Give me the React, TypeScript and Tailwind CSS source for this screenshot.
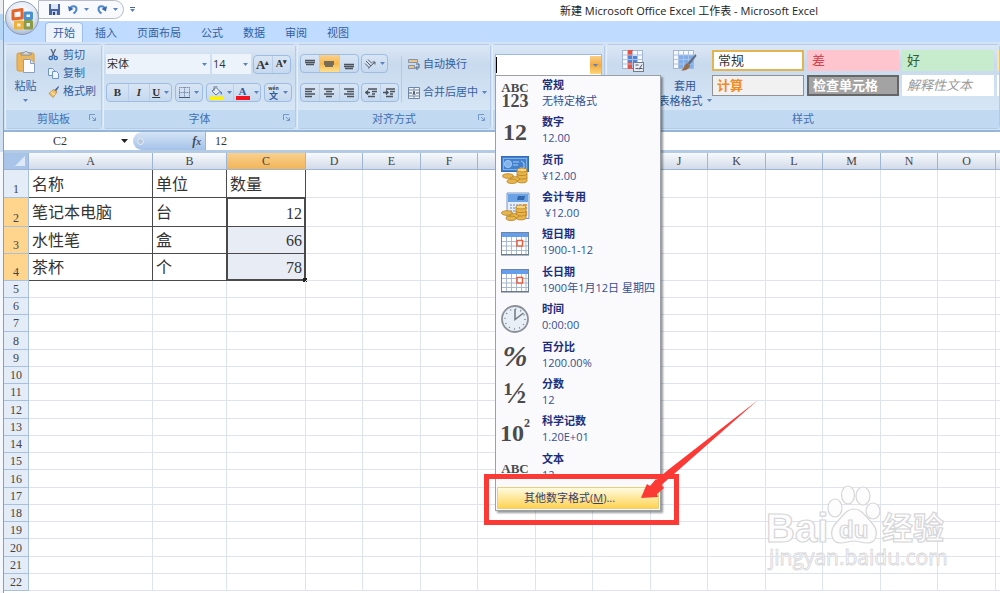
import { useState, type ReactNode } from "react";

const uiFont = "font-['Open_Sans','Noto_Sans_CJK_SC',sans-serif]";
const cellFont = "font-['Liberation_Serif','Noto_Sans_CJK_SC',serif]";

const tabs = ["开始", "插入", "页面布局", "公式", "数据", "审阅", "视图"];

const columns = ["A", "B", "C", "D", "E", "F", "G", "H", "I", "J", "K", "L", "M", "N", "O", "P"];

const data: string[][] = [
  ["名称", "单位", "数量"],
  ["笔记本电脑", "台", "12"],
  ["水性笔", "盒", "66"],
  ["茶杯", "个", "78"],
];

function columnWidth(i: number) {
  if (i === 0) return "w-[124px]";
  if (i === 1) return "w-[74px]";
  if (i === 2) return "w-[79px]";
  return i % 2 ? "w-[57px]" : "w-[58px]";
}

function Caret({ className = "" }: { className?: string }) {
  return (
    <svg className={`w-[5px] h-[3px] shrink-0 ${className}`} viewBox="0 0 5 3" fill="#5b83bd" aria-hidden="true">
      <path d="M0 0h5L2.500 3z" />
    </svg>
  );
}

function Launcher() {
  return (
    <svg className="absolute right-1 top-1 w-2 h-2" viewBox="0 0 8 8" fill="none" stroke="#7397c6" aria-hidden="true">
      <path d="M.5 6V.5H6M3 3l3.500 3.500M6.500 3.500v3h-3" />
    </svg>
  );
}

function Group({ label, launcher, className = "", children }: { label: string; launcher?: boolean; className?: string; children: ReactNode }) {
  return (
    <section className={`flex flex-col rounded-sm border border-[#b3cbe8] border-l-[#e6f0fb] ${className}`}>
      <div className="h-[65px] bg-linear-to-b from-[#dbe7f5] via-[#c9daee] via-30% to-[#d6e6f6]">{children}</div>
      <div className="relative h-[18px] bg-[#c1d9f1] text-center text-[11px] leading-[17px] text-[#4470b3]">
        {label}
        {launcher && <Launcher />}
      </div>
    </section>
  );
}

function ButtonBox({ className = "", children }: { className?: string; children: ReactNode }) {
  return (
    <div className={`flex h-[19px] rounded-sm border border-[#9ebbe0] bg-linear-to-b from-[#d8e5f4] to-[#c6d9ef] divide-x divide-[#b9cfe9] ${className}`}>
      {children}
    </div>
  );
}

function ToolButton({ label, active, children }: { label: string; active?: boolean; children: ReactNode }) {
  return (
    <button
      aria-label={label}
      className={`flex flex-1 items-center justify-center gap-1 ${active ? "bg-linear-to-b from-[#fbd08a] via-[#f9b84b] to-[#fddf8d]" : ""}`}
    >
      {children}
    </button>
  );
}

function Lines({ d }: { d: string }) {
  return (
    <svg className="w-3 h-3" viewBox="0 0 12 12" stroke="#4c525c" strokeWidth="1.500" fill="none" aria-hidden="true">
      <path d={d} />
    </svg>
  );
}

function OfficeLogo() {
  return (
    <svg className="w-9 h-9" viewBox="0 0 36 36" aria-hidden="true">
      <defs>
        <radialGradient id="orb" cx="50%" cy="35%" r="65%">
          <stop offset="0" stopColor="#ffffff" />
          <stop offset=".6" stopColor="#e4eaf4" />
          <stop offset="1" stopColor="#a9b9d2" />
        </radialGradient>
      </defs>
      <circle cx="18" cy="18" r="16.500" fill="url(#orb)" stroke="#8b9dbb" />
      <g fill="none" strokeWidth="3" strokeLinejoin="round">
        <path d="M9 11l9-1.500v8.500l-9 1z" stroke="#e2662c" />
        <path d="M21 13h6.500v5.500H21z" stroke="#4a91d0" />
        <path d="M11.500 22h6.500v6h-6.500z" stroke="#eeb13a" />
        <path d="M21 21.500h6.500V28H21z" stroke="#8a9a45" />
      </g>
    </svg>
  );
}

function UndoIcon({ flip }: { flip?: boolean }) {
  return (
    <svg className={`w-[10px] h-[11px] ${flip ? "-scale-x-100" : ""}`} viewBox="0 0 10 11" fill="none" aria-hidden="true">
      <path d="M2 5c1-4 6.500-3.500 6.500 0 0 2-1.500 3.500-3 4.500" stroke="#5088cd" strokeWidth="2" />
      <path d="M0 2l1 5.500L5.500 5z" fill="#3469b2" />
    </svg>
  );
}

function PasteIcon() {
  return (
    <svg className="w-5 h-[22px]" viewBox="0 0 20 22" aria-hidden="true">
      <rect x="1" y="2" width="17" height="18" rx="1.500" fill="#ecb75c" stroke="#d79a3a" />
      <path d="M5 4V2h3c0-2 4-2 4 0h3v2z" fill="#d8dce2" stroke="#77808c" strokeWidth=".8" />
      <path d="M7.500 8.500h7l4 4v9h-11z" fill="#fafcff" stroke="#8ba1bf" />
      <path d="M14.500 8.500v4h4" fill="#dce6f3" stroke="#8ba1bf" />
    </svg>
  );
}

function CutIcon() {
  return (
    <svg className="w-[11px] h-3" viewBox="0 0 11 12" fill="none" aria-hidden="true">
      <path d="M3 0l3.500 7.500M7.500 0L4 7.500" stroke="#56677f" strokeWidth="1.300" />
      <circle cx="2.800" cy="9" r="1.600" stroke="#3168b5" strokeWidth="1.400" />
      <circle cx="7.700" cy="9" r="1.600" stroke="#3168b5" strokeWidth="1.400" />
    </svg>
  );
}

function CopyIcon() {
  return (
    <svg className="w-[11px] h-3" viewBox="0 0 11 12" fill="#eef4fc" stroke="#6e94c8" aria-hidden="true">
      <path d="M.5 1.500h4l2 2v5h-6z" />
      <path d="M4.500 4.500h4l2 2v5h-6z" />
    </svg>
  );
}

function BrushIcon() {
  return (
    <svg className="w-[11px] h-3" viewBox="0 0 11 12" aria-hidden="true">
      <path d="M10.500 0L6.500 4l1.500 1.500L11 1z" fill="#46629a" />
      <path d="M5.500 3.500L1 7.500l4 4 4-5.500z" fill="#f0c169" stroke="#b07c2b" strokeWidth=".7" />
      <path d="M3 6l4 3" stroke="#fff3ce" />
    </svg>
  );
}

function TableIcon({ brush }: { brush?: boolean }) {
  return (
    <svg className="w-6 h-[22px]" viewBox="0 0 24 22" aria-hidden="true">
      <rect x=".5" y=".5" width="20" height="18" fill="#f5f8fd" stroke="#a3b5d1" />
      {brush ? (
        <rect x="5" y="5" width="15" height="13" fill="#7faeed" />
      ) : (
        <>
          <path d="M6 0h5v19H6z" fill="#e25443" />
          <path d="M6 6h9v6H6z" fill="#4f84d6" />
        </>
      )}
      <path d="M5.500 1v17M10.500 1v17M15.500 1v17M1 5h19M1 9.500h19M1 14h19" stroke="#adc2e2" fill="none" />
      {brush ? (
        <>
          <path d="M22.500 4l-8 9 2 2 7-9z" fill="#617087" />
          <path d="M14 13l3 2.500c-1 4-5 5.500-9 5 3-1.500 3-5.500 6-7.500z" fill="#966d46" />
        </>
      ) : (
        <>
          <rect x="11.500" y="12.500" width="10" height="9" fill="#e9edf3" stroke="#737c89" />
          <path d="M13.500 15h3M13.500 18.500h3M20 14.500l-3 5M18 18.500h2.500" stroke="#4e5866" />
        </>
      )}
    </svg>
  );
}

function Coins() {
  return (
    <g fill="#e8b54a" stroke="#b57f23" strokeWidth=".8">
      <path d="M16 15v11c0 2.500 10 2.500 10 0V15z" />
      <ellipse cx="21" cy="15" rx="5" ry="2" fill="#f8d57c" />
      <path d="M16 19c0 2 10 2 10 0M16 22.500c0 2 10 2 10 0" fill="none" />
      <ellipse cx="7" cy="21" rx="5.500" ry="2.300" />
      <ellipse cx="14" cy="24" rx="4.500" ry="2.300" />
      <ellipse cx="11" cy="26.300" rx="5" ry="2.200" />
    </g>
  );
}

function CurrencyIcon() {
  return (
    <svg className="w-7 h-[29px]" viewBox="0 0 28 29" aria-hidden="true">
      <rect x=".5" y="1.500" width="27" height="15" fill="#4381cf" stroke="#346cb4" />
      <rect x="2.500" y="3.500" width="23" height="11" fill="none" stroke="#7fb0e8" />
      <circle cx="7" cy="9" r="3.500" fill="#82b3ea" stroke="#a9cdf3" />
      <path d="M12 7h6M12 10h5M20 6l3 2v5h-4" stroke="#a9cdf3" fill="none" />
      <Coins />
    </svg>
  );
}

function AccountingIcon() {
  return (
    <svg className="w-[30px] h-[29px]" viewBox="0 0 30 29" aria-hidden="true">
      <path d="M7 1h22v25.500H7z" fill="#e4edf9" stroke="#7498cb" />
      <path d="M8 2h20v8H8z" fill="#6ba2e6" />
      <path d="M17 8l1-4h7l-1 4z" fill="#3366ab" />
      <path d="M10 13h12M10 16h9M10 19h7" stroke="#97aac9" strokeWidth="1.500" strokeDasharray="2 1" />
      <path d="M23 13h4M24 16h3M26 19v5" stroke="#e79b56" strokeWidth="2" />
      <Coins />
    </svg>
  );
}

function CalendarIcon() {
  return (
    <svg className="w-7 h-6" viewBox="0 0 28 24" fill="none" aria-hidden="true">
      <rect x=".5" y=".5" width="27" height="22" fill="#fff" stroke="#70839f" />
      <path d="M1 1h26v4H1z" fill="#659eec" />
      <path d="M5.500 5v17M10.500 5v17M15.500 5v17M20.500 5v17M25 5v17M1 9.500h26M1 14h26M1 18.500h26" stroke="#a9b9cf" />
      <rect x="16" y="8.500" width="5.500" height="5.500" stroke="#ea5f42" strokeWidth="1.500" fill="#fff" />
      <path d="M0 23h28" stroke="#65707f" />
    </svg>
  );
}

function ClockIcon() {
  return (
    <svg className="w-7 h-7" viewBox="0 0 28 28" fill="none" aria-hidden="true">
      <circle cx="14" cy="14" r="13" fill="#e9eff7" stroke="#8b9097" strokeWidth="1.800" />
      <circle cx="14" cy="14" r="10" stroke="#78838f" strokeWidth="1.500" strokeDasharray="1 4.236" />
      <path d="M14 4v10.500l8.500-6.500" stroke="#737a83" strokeWidth="1.500" />
    </svg>
  );
}

interface NumberFormat {
  name: string;
  sample: string;
  icon: ReactNode;
}

const formats: NumberFormat[] = [
  {
    name: "常规",
    sample: "无特定格式",
    icon: (
      <span className="flex flex-col items-center">
        <span className="text-[13px] leading-[13px]">ABC</span>
        <span className="text-[18px] leading-[15px]">123</span>
      </span>
    ),
  },
  { name: "数字", sample: "12.00", icon: <span className="text-2xl leading-6">12</span> },
  { name: "货币", sample: "¥12.00", icon: <CurrencyIcon /> },
  { name: "会计专用", sample: " ¥12.00", icon: <AccountingIcon /> },
  { name: "短日期", sample: "1900-1-12", icon: <CalendarIcon /> },
  { name: "长日期", sample: "1900年1月12日 星期四", icon: <CalendarIcon /> },
  { name: "时间", sample: "0:00:00", icon: <ClockIcon /> },
  { name: "百分比", sample: "1200.00%", icon: <span className="text-3xl italic">%</span> },
  { name: "分数", sample: "12", icon: <span className="text-3xl">½</span> },
  {
    name: "科学记数",
    sample: "1.20E+01",
    icon: (
      <span className="flex items-start">
        <span className="pt-1 text-2xl leading-6">10</span>
        <span className="text-xs leading-3">2</span>
      </span>
    ),
  },
  { name: "文本", sample: "12", icon: <span className="text-[13px]">ABC</span> },
];

function FormatMenu() {
  return (
    <div role="menu" className="absolute -left-px top-full z-10 w-[166px] border border-[#9aa0a8] bg-[#fafafd] shadow-[2px_2px_2px_#0006]">
      <div className="h-[400px] overflow-hidden">
        <div className="grid h-[411px] auto-rows-fr">
          {formats.map((f) => (
            <button key={f.name} role="menuitem" className="flex min-h-0 items-start text-left">
              <span className="flex h-[37px] w-[38px] shrink-0 items-center justify-center text-center font-['Liberation_Serif',serif] font-bold leading-none text-[#4b4b4b]">
                {f.icon}
              </span>
              <span className="pl-2 pt-px text-[11px] leading-4 whitespace-pre text-[#35508f]">
                <span className="block font-bold text-[#1c2f7c]">{f.name}</span>
                {f.sample}
              </span>
            </button>
          ))}
        </div>
      </div>
      <div className="p-px pt-[11px]">
        <button
          role="menuitem"
          className="block h-[22px] w-full border border-[#e8cf7e] bg-linear-to-b from-[#fffbe0] via-[#ffe9a0] via-45% to-[#ffd24f] pl-[26px] text-left text-[11px] leading-5 text-[#35426e]"
        >
          其他数字格式(<u>M</u>)...
        </button>
      </div>
    </div>
  );
}

function TitleBar() {
  return (
    <header className="relative flex h-[21px] shrink-0 items-start bg-white">
      <button aria-label="Office" className="absolute left-0 top-0 z-10 rounded-full">
        <OfficeLogo />
      </button>
      <div className="ml-[34px] flex h-[19px] w-[86px] items-center rounded-r-full border border-[#b6bcc6] bg-[#f7f9fc] pl-[10px]">
        <button aria-label="保存">
          <svg className="w-[11px] h-[11px]" viewBox="0 0 11 11" aria-hidden="true">
            <path d="M0 0h11v11H0z" fill="#4764a4" />
            <path d="M2 0h7v5H2z" fill="#dce8fa" />
            <path d="M3 7h5v4H3z" fill="#bed0ee" />
            <path d="M4 8h2v3H4z" fill="#29447c" />
          </svg>
        </button>
        <button aria-label="撤消" className="ml-2 flex items-center gap-[6px]">
          <UndoIcon />
          <Caret />
        </button>
        <button aria-label="恢复" className="ml-2 flex items-center gap-[6px]">
          <UndoIcon flip />
          <Caret />
        </button>
      </div>
      <button aria-label="自定义快速访问工具栏" className="ml-[6px] mt-[7px] flex flex-col gap-px">
        <span className="h-px w-[5px] bg-[#4c648e]" />
        <Caret />
      </button>
      <h1 className="ml-[425px] text-[11px] leading-[21px] text-[#222] whitespace-nowrap">
        新建 Microsoft Office Excel 工作表 - Microsoft Excel
      </h1>
    </header>
  );
}

function TabBar() {
  const [current, setCurrent] = useState("开始");
  return (
    <nav role="tablist" className="flex h-[21px] shrink-0 items-end gap-1 bg-[#bfdbff] pl-[41px]">
      {tabs.map((t) => (
        <button
          key={t}
          role="tab"
          aria-selected={t === current}
          onClick={() => setCurrent(t)}
          className={`h-5 rounded-t-sm border border-b-0 px-[7px] text-[11px] leading-[17px] text-[#35609f] ${
            t === current ? "border-[#9cbde8] bg-[#ecf3fb]" : "border-transparent"
          }`}
        >
          {t}
        </button>
      ))}
    </nav>
  );
}

function ClipboardGroup() {
  return (
    <Group label="剪贴板" launcher className="w-[97px]">
      <div className="flex h-full pt-px text-[11px] text-[#35609f]">
        <button className="flex w-[39px] flex-col items-center justify-start pt-[5px]">
          <PasteIcon />
          <span className="leading-4 mt-[5px]">粘贴</span>
          <Caret className="mt-[5px]" />
        </button>
        <div className="flex flex-col pl-[3px]">
          <button className="flex h-[18px] items-center gap-1"><CutIcon />剪切</button>
          <button className="flex h-[18px] items-center gap-1"><CopyIcon />复制</button>
          <button className="flex h-[19px] items-center gap-1"><BrushIcon />格式刷</button>
        </div>
      </div>
    </Group>
  );
}

function Picker({ label, value, className }: { label: string; value: string; className: string }) {
  return (
    <div className={`relative ${className}`}>
      <select aria-label={label} defaultValue={value} className="block h-5 w-full appearance-none bg-[#ecf3fb] pl-px text-[11px] leading-5 text-[#333]">
        <option>{value}</option>
      </select>
      <Caret className="pointer-events-none absolute right-[3px] top-[9px]" />
    </div>
  );
}

function FontGroup() {
  return (
    <Group label="字体" launcher className="w-[193px]">
      <div className="flex flex-col gap-[9px] px-[2px] pt-[9px] font-['Liberation_Serif',serif] font-bold text-[#333]">
        <div className="flex h-5 items-center gap-[2px] font-normal font-['Open_Sans','Noto_Sans_CJK_SC',sans-serif]">
          <Picker label="字体" value="宋体" className="w-[104px]" />
          <Picker label="字号" value="14" className="w-[39px]" />
          <ButtonBox className="w-[38px] font-['Liberation_Serif',serif] font-bold">
            <ToolButton label="增大字号"><span className="text-[13px] leading-none">A<sup className="text-[7px]">▴</sup></span></ToolButton>
            <ToolButton label="减小字号"><span className="text-[10px] leading-none">A<sup className="text-[7px]">▾</sup></span></ToolButton>
          </ButtonBox>
        </div>
        <div className="flex gap-[3px] text-[11px] leading-none">
          <ButtonBox className="w-[66px]">
            <ToolButton label="加粗">B</ToolButton>
            <ToolButton label="倾斜"><i>I</i></ToolButton>
            <ToolButton label="下划线"><u>U</u><Caret /></ToolButton>
          </ButtonBox>
          <ButtonBox className="w-7">
            <ToolButton label="边框">
              <svg className="w-[11px] h-[11px]" viewBox="0 0 11 11" fill="none" stroke="#7e91ad" aria-hidden="true">
                <path d="M.5 0v10M5.500 0v10M10.500 0v10M0 .5h11M0 5.500h11" strokeDasharray="1.500 .5" />
                <path d="M0 10.500h11" stroke="#46566e" />
              </svg>
              <Caret />
            </ToolButton>
          </ButtonBox>
          <ButtonBox className="w-[55px]">
            <ToolButton label="填充颜色">
              <svg className="w-[14px] h-[14px]" viewBox="0 0 14 14" aria-hidden="true">
                <path d="M3 5l4-3.500L11 5.500 7 9z" fill="#e6edf7" stroke="#64758e" />
                <path d="M5 5V1.500C5-.5 8-.5 8 1.500" fill="none" stroke="#64758e" />
                <path d="M11 5c3 1 2 3 1 4z" fill="#3776c5" />
                <path d="M0 10.500h14V14H0z" fill="#fff200" />
              </svg>
              <Caret />
            </ToolButton>
            <ToolButton label="字体颜色">
              <span className="h-[14px] w-[14px] border-b-4 border-[#f1131d] text-center text-[11px] leading-[10px] text-[#315a9d]">A</span>
              <Caret />
            </ToolButton>
          </ButtonBox>
          <ButtonBox className="w-7">
            <ToolButton label="拼音">
              <span className="text-center font-['Noto_Sans_CJK_SC',sans-serif] text-[#315a9d]">
                <span className="block text-[5px] leading-[7px] text-[#333]">wén</span>
                <span className="block text-[9px] leading-[10px]">文</span>
              </span>
              <Caret />
            </ToolButton>
          </ButtonBox>
        </div>
      </div>
    </Group>
  );
}

function AlignmentGroup() {
  return (
    <Group label="对齐方式" launcher className="w-[194px]">
      <div className="flex h-full pt-[9px] text-[11px] text-[#35609f]">
        <div className="flex flex-col gap-[9px] pl-[2px] w-[103px]">
          <div className="flex h-5 gap-[2px]">
            <ButtonBox className="w-[59px]">
              <ToolButton label="顶端对齐"><Lines d="M1 2.500h10M1 4.500h10M2 6.500h8" /></ToolButton>
              <ToolButton label="垂直居中" active><Lines d="M1 4h10M1 6h10M2 8h8" /></ToolButton>
              <ToolButton label="底端对齐"><Lines d="M1 6.500h10M1 8.500h10M2 10.500h8" /></ToolButton>
            </ButtonBox>
            <ButtonBox className="w-[27px]">
              <ToolButton label="方向">
                <svg className="w-3 h-3" viewBox="0 0 12 12" fill="none" stroke="#555d69" aria-hidden="true">
                  <path d="M2 3l5 5M4 1.500l4 4M1 5.500l4 4M4 10.500L11 4M8.500 4H11v2.500" />
                </svg>
                <Caret />
              </ToolButton>
            </ButtonBox>
          </div>
          <div className="flex gap-[2px]">
            <ButtonBox className="w-[59px]">
              <ToolButton label="左对齐"><Lines d="M1 2h10M1 4.500h7M1 7h10M1 9.500h7" /></ToolButton>
              <ToolButton label="居中"><Lines d="M1 2h10M3 4.500h6M1 7h10M3 9.500h6" /></ToolButton>
              <ToolButton label="右对齐"><Lines d="M1 2h10M4 4.500h7M1 7h10M4 9.500h7" /></ToolButton>
            </ButtonBox>
            <ButtonBox className="w-[38px]">
              <ToolButton label="减少缩进量"><Lines d="M3 2h9M7 4.500h5M7 7h3M3 9.500h7M0 5.500h5M3 3.500l-2 2 2 2" /></ToolButton>
              <ToolButton label="增加缩进量"><Lines d="M3 2h9M7 4.500h5M7 7h3M3 9.500h7M0 5.500h5M3 3.500l2 2-2 2" /></ToolButton>
            </ButtonBox>
          </div>
        </div>
        <div className="mt-[2px] h-[46px] w-px bg-[#b3cae6]" />
        <div className="flex flex-col gap-[9px] pl-[6px]">
          <button className="flex h-5 items-center gap-[3px]">
            <svg className="w-3 h-3" viewBox="0 0 12 12" fill="none" aria-hidden="true">
              <path d="M.5 1.500h9v3h-9zM.5 7.500h6v3h-6z" fill="#e9c58c" stroke="#8893a3" />
              <path d="M8 6h3v4H8M9.500 8L7.500 10l2 2" stroke="#4d6385" />
            </svg>
            自动换行
          </button>
          <button className="flex h-[19px] items-center gap-[3px]">
            <svg className="w-3 h-3" viewBox="0 0 12 12" fill="none" stroke="#6f86a8" aria-hidden="true">
              <path d="M.5.5h11v11H.5zM.5 3h11M.5 9h11M6 0v3M6 9v3" fill="#f2f6fc" />
              <path d="M1 6h3M8 6h3M5 8l1-4 1 4" stroke="#41556f" />
            </svg>
            合并后居中
            <Caret className="ml-px" />
          </button>
        </div>
      </div>
    </Group>
  );
}

function NumberGroup() {
  return (
    <Group label="" className="w-[113px]">
      <div className="px-[2px] pt-[9px]">
        <div className="relative flex h-[22px] border border-[#9ebbe0] bg-white py-px">
          <input aria-label="数字格式" className="my-px w-0 flex-1 border-l border-black bg-white outline-none" />
          <button aria-label="打开格式列表" className="flex w-[11px] items-center justify-center bg-linear-to-b from-[#f8cf83] via-[#f2a93f] to-[#fbd679]">
            <Caret />
          </button>
          <FormatMenu />
        </div>
      </div>
    </Group>
  );
}

const styleCells = [
  { name: "常规", className: "bg-white text-[#333] border-2 border-[#e2b552]" },
  { name: "差", className: "bg-[#ffc5cf] text-[#d5444c] border border-[#ffc5cf]" },
  { name: "好", className: "bg-[#c6eccd] text-[#2e6137] border border-[#c6eccd]" },
  { name: "", className: "bg-[#ffe699] border border-[#ffe699]" },
  { name: "计算", className: "bg-[#f1f1f1] text-[#f58a1c] border border-[#929292] font-bold" },
  { name: "检查单元格", className: "bg-[#a3a3a3] text-white border-2 border-[#666] font-bold" },
  { name: "解释性文本", className: "bg-white text-[#999] border border-white italic" },
  { name: "", className: "bg-white border border-white" },
];

function StylesGroup() {
  return (
    <Group label="样式" className="min-w-0 flex-1">
      <div className="flex h-full overflow-hidden pl-[3px] pt-[5px] text-[11px] text-[#2d5797]">
        <button aria-label="条件格式" className="flex w-12 shrink-0 flex-col items-center justify-start">
          <TableIcon />
        </button>
        <button className="flex w-[54px] shrink-0 flex-col items-center justify-start">
          <TableIcon brush />
          <span className="mt-[6px] leading-[15px]">套用</span>
          <span className="flex items-center gap-1 whitespace-nowrap leading-[15px]">表格格式<Caret /></span>
        </button>
        <div className={`grid shrink-0 auto-rows-[21px] grid-cols-[repeat(4,92px)] gap-x-[3px] gap-y-1 text-[13px] ${cellFont}`}>
          {styleCells.map((s, i) => (
            <button key={i} className={`pl-1 text-left leading-[17px] ${s.className}`}>
              {s.name}
            </button>
          ))}
        </div>
      </div>
    </Group>
  );
}

function FormulaBar() {
  return (
    <div className={`flex h-[21px] shrink-0 items-center border-b-[3px] border-[#b4cbe6] bg-white text-[12px] text-[#333] ${cellFont}`}>
      <input aria-label="名称框" defaultValue="C2" className="w-[112px] text-center outline-none" />
      <svg className="w-[7px] h-1 ml-[5px]" viewBox="0 0 7 4" fill="#222" aria-hidden="true">
        <path d="M0 0h7L3.500 4z" />
      </svg>
      <button
        aria-label="插入函数"
        className="ml-[5px] flex h-full w-[73px] items-center justify-between rounded-l-full border-r border-[#9ab5d8] bg-linear-to-b from-[#d5e4f6] to-[#a4c2e8] pl-1 pr-1"
      >
        <span className="h-[7px] w-[7px] rounded-full bg-[#bccadd] border border-[#e5edf8]" />
        <i className="font-bold text-[#3f4a5a]">f<small>x</small></i>
      </button>
      <input aria-label="编辑栏" defaultValue="12" className="flex-1 pl-[9px] outline-none" />
    </div>
  );
}

function rowHeight(r: number) {
  if (r === 1) return "h-7";
  if (r === 2) return "h-[29px]";
  if (r === 3 || r === 4) return "h-[27px]";
  return r % 4 === 0 ? "h-[18px]" : "h-[17px]";
}

function cellClass(r: number, c: number) {
  const inTable = r <= 4 && c < 3;
  if (!inTable) return "border-r border-b border-[#dde3f1]";
  if (c < 2 || r === 1) return "border-r border-b border-[#4a4a4a]";
  const edge = r === 2 ? "border-t border-b" : r === 4 ? "border-b-2" : "border-b";
  return `border-l border-r-2 border-[#4a4a4a] text-right ${edge} ${r > 2 ? "bg-[#e8ecf5]" : ""}`;
}

function Sheet() {
  return (
    <div className="min-h-0 flex-1 overflow-hidden">
      <table className={`w-max table-fixed border-separate border-spacing-0 bg-white ${cellFont}`}>
        <colgroup>
          <col className="w-[25px]" />
          {columns.map((c, i) => (
            <col key={c} className={columnWidth(i)} />
          ))}
        </colgroup>
        <thead>
          <tr className="h-[17px] text-[12px] leading-4 text-[#444]">
            <th aria-label="全选" className="border-r border-b border-[#9eb6d4] bg-[#a9c4e9] p-0">
              <svg className="ml-auto mr-[3px] w-[10px] h-[10px]" viewBox="0 0 10 10" fill="#dde9f8" aria-hidden="true">
                <path d="M10 0v10H0z" />
              </svg>
            </th>
            {columns.map((c, i) => (
              <th
                key={c}
                className={`border-r border-b border-[#9eb6d4] p-0 font-normal ${
                  c === "C" ? "bg-linear-to-b from-[#f9d08c] to-[#f1b558]" : "bg-linear-to-b from-[#f7f9fc] to-[#d3dbe9]"
                }`}
              >
                {i < 15 && c}
              </th>
            ))}
          </tr>
        </thead>
        <tbody>
          {Array.from({ length: 22 }, (_, i) => i + 1).map((r) => (
            <tr key={r} className={rowHeight(r)}>
              <th
                className={`border-r border-b border-[#a9c0dd] p-0 align-bottom text-[12px] leading-4 font-normal text-[#444] ${
                  r >= 2 && r <= 4 ? "bg-[#ffd48c]" : "bg-[#e4ecf7]"
                }`}
              >
                {r}
              </th>
              {columns.map((c, i) => (
                <td key={c} className={`relative p-0 pl-[3px] pr-[2px] pt-[2px] text-[16px] leading-[14px] text-[#333] whitespace-nowrap ${cellClass(r, i)}`}>
                  {data[r - 1]?.[i]}
                  {r === 4 && c === "C" && <span className="absolute -right-[3px] -bottom-[3px] h-1 w-1 bg-[#222]" />}
                </td>
              ))}
            </tr>
          ))}
        </tbody>
      </table>
    </div>
  );
}

function Callout() {
  return (
    <>
      <div className="pointer-events-none absolute left-[484px] top-[474px] z-20 h-[51px] w-[195px] border-[5px] border-[#fb3a36]" />
      <svg className="pointer-events-none absolute left-[640px] top-[399px] z-20 h-[100px] w-[120px]" viewBox="0 0 120 100" fill="#fb3a36" aria-hidden="true">
        <path d="M118 1L34 75l-15 13-5-5 14-12z" />
        <path d="M1 99L6 87l1-2 3 2 6-7 8 9-7 6 1 3z" />
      </svg>
    </>
  );
}

function Watermark() {
  return (
    <svg
      className="pointer-events-none absolute left-[764px] top-[482px] z-10 h-[94px] w-[184px] font-['Open_Sans','Noto_Sans_CJK_SC',sans-serif]"
      viewBox="0 0 184 94"
      fill="#fdfdfd"
      stroke="#d6d6d8"
      strokeWidth="1.200"
    >
      <text x="2" y="60" fontSize="40" fontWeight="700" fontFamily="Liberation Sans">Bai</text>
      <ellipse cx="71" cy="26" rx="7" ry="9" />
      <ellipse cx="84" cy="13" rx="6.500" ry="9" />
      <ellipse cx="99" cy="14" rx="7" ry="9" />
      <ellipse cx="109" cy="29" rx="7" ry="8" />
      <path d="M90 27c8 0 11 7 17 13 9 9 6 21-4 21-5 0-8-2-13-2s-8 2-13 2c-10 0-13-12-4-21 6-6 9-13 17-13z" />
      <text x="75" y="56" fontSize="24" fontWeight="700" fontFamily="Liberation Sans">du</text>
      <text x="118" y="57" fontSize="31" fontWeight="700">经验</text>
      <text x="5" y="83" fontSize="21" strokeWidth=".8">jingyan.baidu.com</text>
    </svg>
  );
}

export default function App() {
  return (
    <div className={`relative flex h-screen overflow-hidden bg-white ${uiFont}`}>
      {/* Edge of the window behind */}
      <div className="flex w-1 shrink-0 flex-col border-r border-[#8e9db1]">
        <div className="h-[14px] bg-[#eceef1]" />
        <div className="h-[26px] bg-[#b4d6f5]" />
        <div className="h-[112px] bg-[#cfe0f3]" />
        <div className="flex-1 bg-[#f4f7fc]" />
      </div>
      <div className="flex min-w-0 flex-1 flex-col">
        <TitleBar />
        <TabBar />
        <div className="relative flex shrink-0 gap-px border-b-2 border-[#94b6d8] bg-[#d3e3f5] pl-px pt-[2px] pb-px">
          <ClipboardGroup />
          <FontGroup />
          <AlignmentGroup />
          <NumberGroup />
          <StylesGroup />
        </div>
        <FormulaBar />
        <Sheet />
      </div>
      <Watermark />
      <Callout />
    </div>
  );
}
